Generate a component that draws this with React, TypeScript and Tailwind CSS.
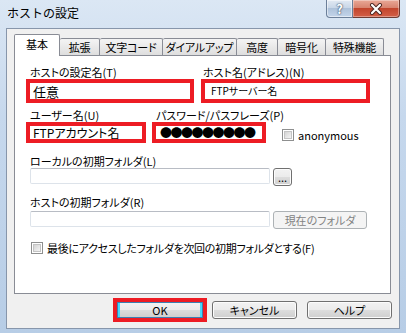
import React from 'react';

const btnFace =
  'bg-[linear-gradient(#f2f2f2,#ebebeb_50%,#dddddd_50%,#cfcfcf)] shadow-[inset_0_0_0_1px_#fcfcfc]';

const PushButton = ({ children, className = '' }: { children: React.ReactNode; className?: string }) => (
  <div
    className={`flex items-center justify-center rounded-[3px] border border-[#707070] text-[11px] leading-none text-black whitespace-nowrap ${btnFace} ${className}`}
  >
    {children}
  </div>
);

const Check = () => (
  <div className="w-[12px] h-[12px] shrink-0 border border-[#8e8f8f] bg-white p-px">
    <div className="w-full h-full border border-[#c4c4c4] bg-[linear-gradient(135deg,#d4d4d4,#f4f4f4)]" />
  </div>
);

const Edit = ({ className = '' }: { className?: string }) => (
  <div className={`h-[16px] border border-[#dde3ea] border-t-[#b8bcc4] bg-white rounded-[2px] ${className}`} />
);

const tabs = [
  { label: '拡張', w: 'w-[40px]' },
  { label: '文字コード', w: 'w-[63px]' },
  { label: 'ダイアルアップ', w: 'w-[74px]' },
  { label: '高度', w: 'w-[41px]' },
  { label: '暗号化', w: 'w-[48px]' },
  { label: '特殊機能', w: 'w-[58px]' },
];

export default function App() {
  return (
    <div className="w-[406px] h-[333px] overflow-hidden flex flex-col bg-[linear-gradient(180deg,#dbe7f4,#c6d8ed_35%,#b7cde6)] font-['Noto_Sans_CJK_JP',sans-serif] text-black">
      {/* title bar */}
      <div className="h-[28px] flex justify-between">
        <div className="pl-[7px] pt-[7px] text-[12px] leading-[12px] text-black">ホストの設定</div>
        <div className="flex h-[18px] mr-[6px]">
          <div className="w-[27px] h-full flex items-center justify-center rounded-bl-[4px] border border-t-0 border-[#6b7f99] bg-[linear-gradient(#e2eaf3,#c9d7e8_45%,#aec2da_50%,#c2d4ea)] shadow-[inset_0_0_0_1px_rgba(255,255,255,0.5)]">
            <span className="text-[13px] font-bold leading-none text-white [text-shadow:0_0_2px_#34465e,0_0_1px_#34465e]">?</span>
          </div>
          <div className="w-[47px] h-full flex items-center justify-center rounded-br-[4px] border border-t-0 border-l-0 border-[#6e3b33] bg-[linear-gradient(#e9a897,#d88470_45%,#c2452d_50%,#d35f47)] shadow-[inset_0_0_0_1px_rgba(255,255,255,0.35)]">
            <svg width="14" height="12" viewBox="0 0 14 12">
              <path d="M3 2 L11 10 M11 2 L3 10" stroke="#4a2420" strokeWidth="4" strokeLinecap="round" />
              <path d="M3 2 L11 10 M11 2 L3 10" stroke="#ffffff" strokeWidth="2.2" strokeLinecap="round" />
            </svg>
          </div>
        </div>
      </div>

      {/* client area */}
      <div className="ml-[6px] w-[394px] h-[301px] border border-[#8796ab] bg-[#f0f0f0] flex flex-col [font-feature-settings:'palt']">
        {/* tab strip */}
        <div className="mt-[5px] ml-[7px] h-[21px] flex items-end">
          <div className="relative z-10 w-[46px] h-[22px] -mb-px border border-b-0 border-[#898c95] bg-white rounded-t-[2px] flex justify-center pt-[4px] text-[11px] leading-[11px] whitespace-nowrap">
            基本
          </div>
          {tabs.map((t) => (
            <div
              key={t.label}
              className={`${t.w} h-[17px] border-t border-r border-[#898c95] rounded-t-[2px] bg-[linear-gradient(#f4f4f4,#e9e9e9_50%,#dedede)] flex justify-center items-center text-[11px] leading-[11px] whitespace-nowrap tracking-[-0.2px]`}
            >
              {t.label}
            </div>
          ))}
        </div>

        {/* panel */}
        <div className="ml-[7px] w-[377px] h-[239px] border border-[#898c95] bg-white pl-[11px] pt-[10px] flex flex-col text-[11px] leading-[12px] whitespace-nowrap">
          {/* row 1 */}
          <div className="flex gap-[7px]">
            <div className="flex flex-col w-[168px]">
              <div className="pl-[4px] h-[12px]">ホストの設定名(T)</div>
              <div className="mt-[1px] w-[168px] h-[24px] border-4 border-[#ed1c24] bg-white flex items-center pl-[3px] text-[13px] leading-none">
                任意
              </div>
            </div>
            <div className="flex flex-col w-[169px]">
              <div className="pl-[2px] h-[12px]">ホスト名(アドレス)(N)</div>
              <div className="mt-[1px] w-[169px] h-[24px] border-4 border-[#ed1c24] bg-white flex items-center pl-[6px] text-[10px] leading-none">
                FTPサーバー名
              </div>
            </div>
          </div>

          {/* row 2 */}
          <div className="mt-[6px] flex items-start">
            <div className="flex flex-col w-[120px]">
              <div className="pl-[4px] h-[12px]">ユーザー名(U)</div>
              <div className="mt-[1px] w-[120px] h-[21px] border-4 border-[#ed1c24] bg-white flex items-center pl-[3px] text-[12px] leading-none">
                FTPアカウント名
              </div>
            </div>
            <div className="ml-[6px] flex flex-col w-[114px]">
              <div className="pl-[4px] h-[12px]">パスワード/パスフレーズ(P)</div>
              <div className="mt-[1px] w-[114px] h-[21px] border-4 border-[#ed1c24] bg-white flex items-center pl-[4px] text-[12px] leading-none tracking-[-1.5px]">
                ●●●●●●●●●
              </div>
            </div>
            <div className="ml-[16px] mt-[20px] flex items-center gap-[4px]">
              <Check />
              <span className="text-[11px] leading-none">anonymous</span>
            </div>
          </div>

          {/* local folder */}
          <div className="mt-[12px] pl-[4px] h-[12px]">ローカルの初期フォルダ(L)</div>
          <div className="mt-[1px] pl-[4px] flex items-start gap-[3px]">
            <Edit className="w-[240px]" />
            <PushButton className="w-[19px] h-[18px] text-[10px]">...</PushButton>
          </div>

          {/* host folder */}
          <div className="mt-[10px] pl-[4px] h-[12px]">ホストの初期フォルダ(R)</div>
          <div className="mt-[3px] pl-[4px] flex items-start gap-[3px]">
            <Edit className="w-[240px]" />
            <div className="w-[94px] h-[18px] rounded-[3px] border border-[#adb2b5] bg-[#f4f4f4] flex items-center justify-center text-[11px] leading-none text-[#838383]">
              現在のフォルダ
            </div>
          </div>

          {/* checkbox */}
          <div className="mt-[13px] pl-[5px] flex items-center gap-[4px]">
            <Check />
            <span className="leading-none tracking-[-0.3px]">最後にアクセスしたフォルダを次回の初期フォルダとする(F)</span>
          </div>
        </div>

        {/* dialog buttons */}
        <div className="mt-[4px] ml-[106px] h-[24px] flex items-center">
          <div className="w-[94px] h-[24px] border-4 border-[#ed1c24]">
            <div className="w-full h-full flex items-center justify-center border border-[#3c7fb1] bg-[linear-gradient(#f2f2f2,#ebebeb_50%,#dddddd_50%,#cfcfcf)] shadow-[inset_2px_0_0_#48d7fb,inset_-2px_0_0_#48d7fb] text-[11px] leading-none">
              OK
            </div>
          </div>
          <PushButton className="ml-[5px] w-[85px] h-[18px]">キャンセル</PushButton>
          <PushButton className="ml-[10px] w-[85px] h-[18px]">ヘルプ</PushButton>
        </div>
      </div>
    </div>
  );
}
